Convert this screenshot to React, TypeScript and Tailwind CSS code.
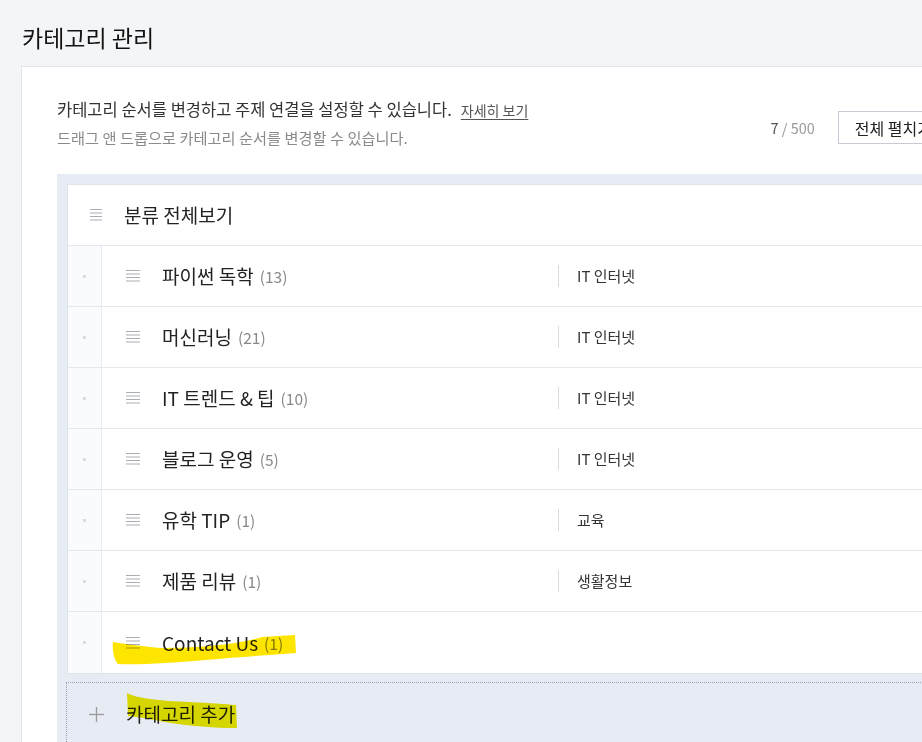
import React from "react";

const FONT = { fontFamily: '"Noto Sans CJK KR", "Noto Sans", sans-serif' };

type Item = { name: string; count: number; topic?: string };

const items: Item[] = [
  { name: "파이썬 독학", count: 13, topic: "IT 인터넷" },
  { name: "머신러닝", count: 21, topic: "IT 인터넷" },
  { name: "IT 트렌드 & 팁", count: 10, topic: "IT 인터넷" },
  { name: "블로그 운영", count: 5, topic: "IT 인터넷" },
  { name: "유학 TIP", count: 1, topic: "교육" },
  { name: "제품 리뷰", count: 1, topic: "생활정보" },
  { name: "Contact Us", count: 1 },
];

function DragIcon({ w }: { w: number }) {
  return (
    <svg width={w} height="12" viewBox={`0 0 ${w} 12`} className="shrink-0">
      {[0.5, 4, 7.5, 11].map((y) => (
        <line key={y} x1="0" x2={w} y1={y} y2={y} stroke="#aaadb3" strokeWidth="1" />
      ))}
    </svg>
  );
}

export default function App() {
  return (
    <div
      className="relative w-[922px] h-[742px] overflow-hidden bg-[#f4f5f7] text-[#222]"
      style={FONT}
    >
      <div className="w-[1000px]">
        <h1 className="pl-[22px] pt-[22px] text-[23px] leading-[30px] font-normal text-[#111]">
          카테고리 관리
        </h1>
        <div className="mt-[14px] ml-[21px] border border-[#e3e6ec] bg-white pl-[35px] pr-[50px] pt-[31px] pb-[40px]">
          <div className="flex items-start justify-between">
            <div>
              <p className="text-[16.5px] leading-[22px] text-[#333]">
                카테고리 순서를 변경하고 주제 연결을 설정할 수 있습니다.
                <a className="ml-[9px] text-[14px] text-[#555] underline underline-offset-[3px]">
                  자세히 보기
                </a>
              </p>
              <p className="mt-[6px] text-[15.25px] leading-[20px] text-[#8a8a8a]">
                드래그 앤 드롭으로 카테고리 순서를 변경할 수 있습니다.
              </p>
            </div>
            <div className="mt-[13px] flex items-center gap-[23px]">
              <span className="text-[14.5px] leading-[20px] text-[#999]">
                <span className="text-[#555]">7</span> / 500
              </span>
              <button className="h-[33px] whitespace-nowrap border border-[#c6cbd4] bg-white px-[16px] text-[16px] text-[#222]">
                전체 펼치기
              </button>
            </div>
          </div>

          <div className="mt-[27px] bg-[#e7ebf3] p-[10px]">
            <div className="border border-[#dfe3ea] bg-white">
              <div className="flex h-[61px] items-center border-b border-[#e3e7ee] pl-[22px]">
                <DragIcon w={12} />
                <span className="ml-[22px] text-[19px] leading-[24px] text-[#222]">분류 전체보기</span>
              </div>
              {items.map((it) => (
                <div
                  key={it.name}
                  className="flex h-[61px] border-b border-[#e3e7ee] last:border-b-0"
                >
                  <div className="flex w-[34px] shrink-0 items-center justify-center border-r border-[#e8ebf1] bg-[#fafbfc]">
                    <span className="h-[3px] w-[3px] bg-[#d9dce0]" />
                  </div>
                  <div className="flex w-[456px] shrink-0 items-center pl-[24px]">
                    <DragIcon w={14} />
                    <span className="ml-[22px] text-[19px] leading-[24px] text-[#222]">{it.name}</span>
                    <span className="ml-[6px] text-[15.5px] leading-[24px] text-[#888]">({it.count})</span>
                  </div>
                  {it.topic && (
                    <div className="flex items-center">
                      <span className="h-[22px] w-[1px] bg-[#d6dae1]" />
                      <span className="ml-[18px] text-[15px] leading-[22px] text-[#333]">{it.topic}</span>
                    </div>
                  )}
                </div>
              ))}
            </div>
            <div className="mt-[8px] -ml-[1px] flex h-[64px] items-center border border-dotted border-[#9ea4ad] pl-[22px]">
              <svg width="15" height="15" viewBox="0 0 15 15" className="shrink-0">
                <line x1="7.5" y1="0" x2="7.5" y2="15" stroke="#9a9a9a" strokeWidth="1.3" />
                <line x1="0" y1="7.5" x2="15" y2="7.5" stroke="#9a9a9a" strokeWidth="1.3" />
              </svg>
              <span className="ml-[22px] text-[19px] leading-[24px] text-[#222]">카테고리 추가</span>
            </div>
          </div>
        </div>
      </div>

      <svg
        className="pointer-events-none absolute left-0 top-0 mix-blend-multiply"
        width="922"
        height="742"
        viewBox="0 0 922 742"
      >
        <path
          d="M113 642 C 125 644, 140 646, 160 648 C 200 648, 240 644, 262 637 L 295 635 L 296 653 C 270 655, 240 657, 205 660 C 170 663, 140 665, 118 664 C 114 660, 112 650, 113 642 Z"
          fill="#fde500"
        />
        <path
          d="M127 693 C 135 698, 160 701, 190 702 C 210 703, 225 704, 236 705 L 237 728 C 215 728, 190 726, 165 722 C 150 719, 138 717, 128 716 Z"
          fill="#ece700"
        />
      </svg>
    </div>
  );
}
